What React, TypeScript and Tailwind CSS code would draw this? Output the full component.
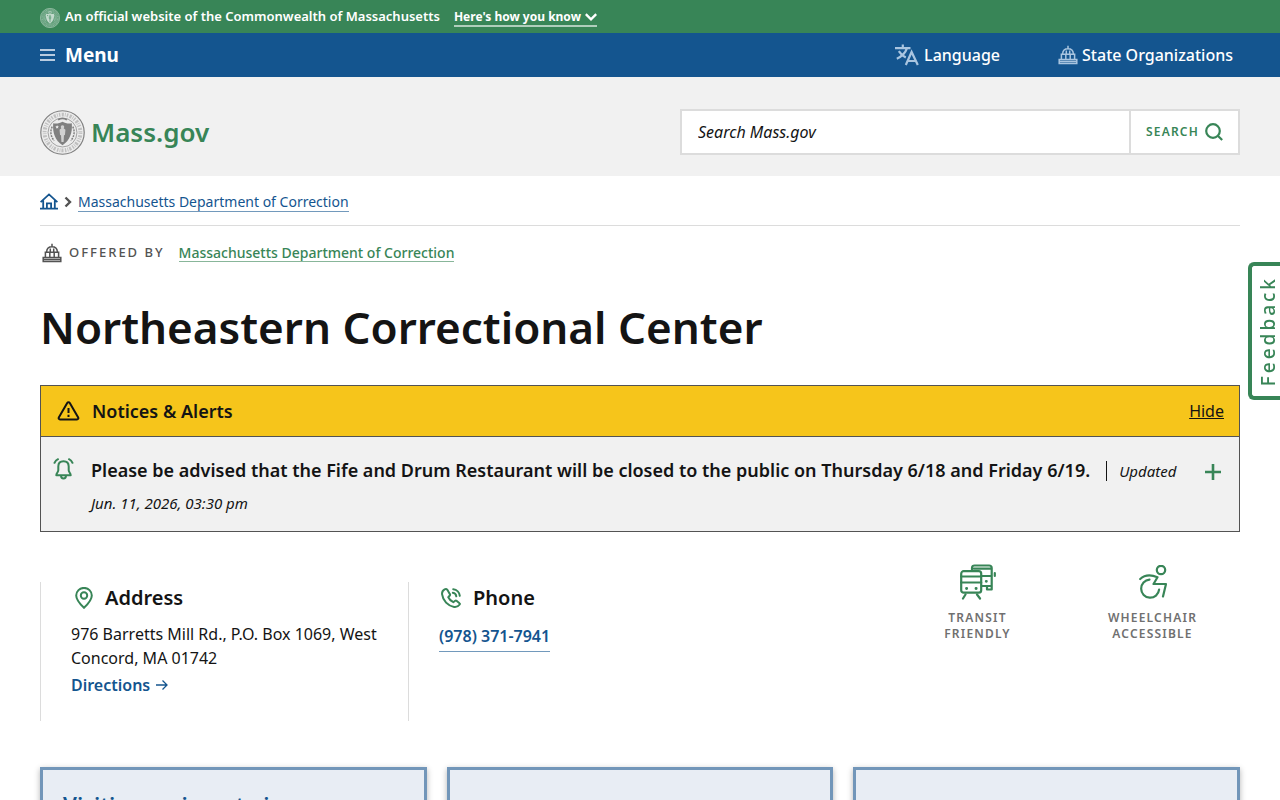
import type { ReactNode } from 'react';

function Seal({ className, color, face }: { className: string; color: string; face: string }) {
  return (
    <svg viewBox="0 0 46 46" className={className} fill="none" aria-hidden="true">
      <circle cx="23" cy="23" r="22.2" fill={face} stroke={color} strokeWidth="1.2" />
      <circle cx="23" cy="23" r="18.3" stroke={color} strokeWidth="4" strokeDasharray="1.4 1.5 2.2 1.1 .8 1.2" opacity=".4" />
      <circle cx="23" cy="23" r="14.8" stroke={color} strokeWidth=".7" />
      <path d="M12.500 17c-2.500 5-1.500 10 2 14.500M33.500 17c2.500 5 1.500 10-2 14.500" stroke={color} strokeWidth="1.5" strokeDasharray="2 1" />
      <path d="M13.500 13.500c3.400.8 6.500 0 9.500-1.500 3 1.500 6.100 2.300 9.500 1.500C33.300 23.500 30.500 31 23 36c-7.500-5-10.300-12.500-9.500-22.500Z" fill={color} />
      <path d="M23 15.500a1.800 1.800 0 0 1 1.200 3.100l1.800 1.600-.5 5.300-1 .2-.4 7h-2.200l-.4-7-1-.2-.5-5.300 1.800-1.600a1.800 1.800 0 0 1 1.200-3.100Z" fill={face} opacity=".75" />
      <path d="m17.500 15.500.6 1.200 1.200.1-.9.9.3 1.200-1.200-.6-1.100.600.2-1.200-.9-.9 1.200-.1Z" fill={face} />
      <path d="M18.500 10c2.500-1.700 6.500-1.700 9 0" stroke={color} strokeWidth="1.800" />
    </svg>
  );
}

function Capitol({ className }: { className: string }) {
  return (
    <svg viewBox="0 0 20 20" className={className} fill="none" stroke="currentColor" strokeWidth="1.500" aria-hidden="true">
      <path d="M10 .8v2.800M4.600 9C4.800 5.600 7 3.800 10 3.800s5.200 1.800 5.400 5.200M8.300 5.500V9M11.700 5.500V9" />
      <path d="M2.600 9.200h14.800M3.400 9.200v5M7.800 9.200v5M12.200 9.200v5M16.600 9.200v5" />
      <path d="M1.200 14.400h17.600v4H1.200zM1.200 16.400h17.600" />
    </svg>
  );
}

function Translate({ className }: { className: string }) {
  return (
    <svg viewBox="0 0 24 22" className={className} fill="none" stroke="currentColor" strokeWidth="2.200" aria-hidden="true">
      <path d="M0 4.200h15.500M7.800 .6v3.600M12 4.200c-1.600 5-5 8.200-10.200 10.500M3.800 7.200c2 3.200 4.400 5 7 6.200" />
      <path d="m10.800 21 5.800-13 6.200 13M13 17h8" />
    </svg>
  );
}

function House() {
  return (
    <svg viewBox="0 0 18 17" className="h-[17px] w-[18px]" fill="none" stroke="currentColor" strokeWidth="1.800" aria-hidden="true">
      <path d="M.6 9.200 9 1.400l8.400 7.800M3.200 7.500V15M14.800 7.500V15M0 15.600h18M6.900 15v-4.700h4.200V15" />
    </svg>
  );
}

function Chevron({ className, down }: { className: string; down?: boolean }) {
  return (
    <svg viewBox="0 0 12 12" className={className} fill="none" stroke="currentColor" strokeWidth="2.400" aria-hidden="true">
      <path d={down ? 'm.8 3.200 5.200 5.200 5.200-5.200' : 'm3.500 1.500 4.500 4.500-4.500 4.500'} />
    </svg>
  );
}

function SearchGlass() {
  return (
    <svg viewBox="0 0 18 18" className="size-[18px]" fill="none" stroke="currentColor" strokeWidth="2.200" aria-hidden="true">
      <circle cx="8" cy="8" r="6.800" />
      <path d="m12.800 12.800 4.400 4.200" />
    </svg>
  );
}

function Warning() {
  return (
    <svg viewBox="0 0 22 20" className="h-5 w-[23px]" fill="none" stroke="currentColor" strokeWidth="2" strokeLinejoin="round" aria-hidden="true">
      <path d="M9.700 2 1.300 16.400c-.5 1 .1 2 1.200 2h17c1.100 0 1.700-1 1.200-2L12.300 2c-.6-1-2-1-2.600 0Z" />
      <path d="M11 7v5M11 13.700v2.200" />
    </svg>
  );
}

function Bell() {
  return (
    <svg viewBox="0 0 20 22" className="h-[22px] w-[21px]" fill="none" stroke="currentColor" strokeWidth="2" strokeLinecap="round" strokeLinejoin="round" aria-hidden="true">
      <path d="M10 3.200c-3.400 0-5.200 2.300-5.200 5.300v3.800c0 1.800-2 3.200-2 4.900h14.400c0-1.700-2-3.100-2-4.900V8.500c0-3-1.800-5.300-5.200-5.300ZM7.500 17.500c0 1.900 1 3 2.500 3s2.500-1.100 2.500-3" />
      <path d="M1 4.800C1.700 3.200 2.800 2 4.500 1.200M19 4.800c-.7-1.600-1.800-2.800-3.500-3.600" />
    </svg>
  );
}

function MapPin() {
  return (
    <svg viewBox="0 0 18 22" className="h-[22px] w-[18px]" fill="none" stroke="currentColor" strokeWidth="2" aria-hidden="true">
      <path d="M9 20.800C5 17 1.200 13 1.200 8.500a7.800 7.600 0 0 1 15.600 0C16.800 13 13 17 9 20.800Z" />
      <circle cx="9" cy="8.500" r="3.200" />
    </svg>
  );
}

function PhoneCall() {
  return (
    <svg viewBox="0 0 20 20" className="size-5" fill="none" stroke="currentColor" strokeWidth="2" strokeLinejoin="round" strokeLinecap="round" aria-hidden="true">
      <path d="M3.600 1.400C1.800 2.400.8 4 1.100 6.300c.8 6.300 5.800 11.600 12 12.600 2.200.3 4.300-.6 5.600-2.400.3-.5.200-1-.2-1.300l-3-2.400c-.4-.3-.9-.3-1.300 0l-1.900 1.400c-2.200-1-3.900-2.700-5-5l1.500-1.700c.3-.4.400-.9.100-1.300L6.500 2c-.6-1-1.700-1.200-2.900-.6Z" />
      <path d="M12.200 1.200c3.600.4 6.300 3.100 6.600 6.600M11.800 4.800c2 .3 3.300 1.600 3.500 3.500" />
    </svg>
  );
}

function Transit() {
  return (
    <svg viewBox="0 0 36 36" className="size-9" fill="none" stroke="currentColor" strokeWidth="2.200" strokeLinecap="round" strokeLinejoin="round" aria-hidden="true">
      <rect x="1.200" y="7.200" width="20" height="21.500" rx="2.500" />
      <path d="M1.200 12.500h20M1.200 18.500h20M5.500 30.500 3 34.500M17 30.500l3 4" />
      <path d="M12 7V4c0-1.700 1-2.500 2.500-2.500H29c1.700 0 2.700.8 2.700 2.500v18H22M14 4.700h16M21.500 12h10M27 22v3.500h4.700V22M34.800 9v3" />
      <path d="M6.500 24.500h.2M16 24.500h.2M26.200 17.300h.2" strokeWidth="2.800" />
    </svg>
  );
}

function Wheelchair() {
  return (
    <svg viewBox="0 0 28 34" className="h-[34px] w-7" fill="none" stroke="currentColor" strokeWidth="2.200" strokeLinejoin="round" strokeLinecap="round" aria-hidden="true">
      <circle cx="22" cy="5" r="4.200" />
      <path d="M1.200 14C5.500 10 10.500 9 18.500 12.200L14.500 19H27l-3 12.500" />
      <path d="M10.500 14.700a9 9 0 1 0 9.600 10" />
    </svg>
  );
}

function Amenity({ icon, top, bottom }: { icon: ReactNode; top: string; bottom: string }) {
  return (
    <li className="flex flex-1 flex-col items-center">
      <span className="flex h-10 items-center text-[#388557]">{icon}</span>
      <span className="mt-2 text-center text-xs leading-4 font-semibold tracking-widest text-[#707070] uppercase">
        {top}
        <br />
        {bottom}
      </span>
    </li>
  );
}

function Card({ children }: { children?: ReactNode }) {
  return (
    <li className="min-h-32 border-3 border-[#7296b9] bg-[#e8edf4] px-5 pt-5 shadow-[0_2px_6px_rgba(0,0,0,0.3)]">
      {children}
    </li>
  );
}

export default function App() {
  return (
    <div className="h-screen overflow-x-hidden overflow-y-auto bg-white font-['Noto_Sans',sans-serif] text-[#141414] [scrollbar-width:none]">
      <div className="flex h-[33px] items-center bg-[#388557] px-10 text-white">
        <Seal className="mt-[3px] size-5" color="#c3dacd" face="#5f9d78" />
        <span className="ml-[5px] text-[13px] font-semibold">An official website of the Commonwealth of Massachusetts</span>
        <button className="mt-[3px] ml-[14px] flex items-center gap-1 border-b-2 border-white/60 text-xs leading-4 font-bold">
          Here&apos;s how you know
          <Chevron className="size-3" down />
        </button>
      </div>

      <nav className="flex h-11 items-center justify-between bg-[#14558f] pr-[47px] pl-10 text-white">
        <button className="flex items-center gap-[10px] text-[19px] font-bold">
          <svg viewBox="0 0 15 12" className="h-3 w-[15px]" stroke="#b9cce0" strokeWidth="2" aria-hidden="true">
            <path d="M0 1h15M0 6h15M0 11h15" />
          </svg>
          Menu
        </button>
        <div className="flex gap-[58px] font-medium">
          <button className="flex items-center gap-[5px]">
            <Translate className="h-[22px] w-6 text-[#a9c5e0]" />
            Language
          </button>
          <button className="flex items-center gap-1">
            <Capitol className="size-5 text-[#a9c5e0]" />
            State Organizations
          </button>
        </div>
      </nav>

      <header className="flex items-start justify-between bg-[#f1f1f1] px-10 pt-8 pb-[21px]">
        <a href="#" className="flex items-center gap-[6px] text-[26px] leading-[46px] font-semibold text-[#388557]">
          <Seal className="size-[45px]" color="#808080" face="#ececec" />
          Mass.gov
        </a>
        <form className="flex h-[46px] w-[560px] border-2 border-[#dcdcdc] bg-white" onSubmit={(e) => e.preventDefault()}>
          <input
            type="search"
            aria-label="Search Mass.gov"
            placeholder="Search Mass.gov"
            className="min-w-0 flex-1 px-4 text-base italic outline-none placeholder:text-[#141414]"
          />
          <button className="flex w-[109px] items-center justify-center gap-[6px] border-l-2 border-[#dcdcdc] text-xs font-semibold tracking-widest text-[#388557]">
            SEARCH
            <SearchGlass />
          </button>
        </form>
      </header>

      <main className="px-10">
        <nav aria-label="Breadcrumb" className="flex h-[50px] items-center border-b border-[#dcdcdc] pt-[2px] text-sm text-[#14558f]">
          <a href="#" aria-label="Home">
            <House />
          </a>
          <Chevron className="mx-1 size-3 text-[#535353]" />
          <a href="#" className="border-b border-[#14558f]/60 leading-[19px]">
            Massachusetts Department of Correction
          </a>
        </nav>

        <div className="mt-4 flex h-[22px] items-center text-[13px]">
          <Capitol className="ml-[2px] size-5 text-[#535353]" />
          <span className="ml-[7px] font-medium tracking-[2px] text-[#535353]">OFFERED BY</span>
          <a href="#" className="ml-[14px] border-b border-[#388557]/60 text-sm leading-4 font-medium text-[#388557]">
            Massachusetts Department of Correction
          </a>
        </div>

        <h1 className="mt-[35px] text-[44px] leading-[56px] font-semibold">Northeastern Correctional Center</h1>

        <section className="mt-[30px] border border-[#535353] bg-[#f1f1f1]">
          <div className="flex h-[51px] items-center justify-between border-b border-[#535353] bg-[#f6c51b] pr-[15px] pl-4">
            <h2 className="flex items-center gap-3 text-lg font-semibold">
              <Warning />
              Notices &amp; Alerts
            </h2>
            <button className="text-base underline">Hide</button>
          </div>
          <div className="flex h-[94px] items-start pt-[18px] pr-[18px] pl-3">
            <span className="mt-[3px] text-[#388557]">
              <Bell />
            </span>
            <p className="ml-[17px] flex-1 pr-5 text-lg leading-[31px] font-semibold">
              Please be advised that the Fife and Drum Restaurant will be closed to the public on Thursday 6/18 and Friday 6/19.
              <span className="ml-4 border-l border-[#141414] pl-3 text-[15px] font-normal italic">Updated Jun. 11, 2026, 03:30 pm</span>
            </p>
            <button aria-label="Expand alert" className="mt-[9px] text-[#388557]">
              <svg viewBox="0 0 16 16" className="size-4" stroke="currentColor" strokeWidth="2.600" aria-hidden="true">
                <path d="M8 0v16M0 8h16" />
              </svg>
            </button>
          </div>
        </section>

        <div className="mt-[30px] flex justify-between">
          <div className="mt-5 flex h-[139px]">
            <section className="w-[368px] border-l border-[#dcdcdc] pl-[30px]">
              <h2 className="flex items-center gap-3 pl-1 text-xl leading-8 font-semibold">
                <span className="text-[#388557]">
                  <MapPin />
                </span>
                Address
              </h2>
              <p className="mt-2 pr-[30px] text-base">976 Barretts Mill Rd., P.O. Box 1069, West Concord, MA 01742</p>
              <a href="#" className="mt-[3px] flex items-center gap-[6px] font-semibold text-[#14558f]">
                Directions
                <svg viewBox="0 0 12 12" className="size-3" fill="none" stroke="currentColor" strokeWidth="1.300" aria-hidden="true">
                  <path d="M0 6h11M6.500 1.500 11 6l-4.500 4.500" />
                </svg>
              </a>
            </section>
            <section className="border-l border-[#dcdcdc] pl-[30px]">
              <h2 className="flex items-center gap-3 pl-[2px] text-xl leading-8 font-semibold">
                <span className="text-[#388557]">
                  <PhoneCall />
                </span>
                Phone
              </h2>
              <a href="tel:+19783717941" className="mt-2 inline-block border-b border-[#14558f]/60 pt-[2px] pb-[3px] leading-6 font-semibold text-[#14558f]">
                (978) 371-7941
              </a>
            </section>
          </div>
          <ul className="flex w-[350px]">
            <Amenity icon={<Transit />} top="Transit" bottom="Friendly" />
            <Amenity icon={<Wheelchair />} top="Wheelchair" bottom="Accessible" />
          </ul>
        </div>

        <ul className="mt-[46px] grid grid-cols-3 gap-5">
          <Card>
            <h2 className="text-[22px] leading-7 font-semibold text-[#14558f]">
              <a href="#">Visiting an inmate in Massachusetts</a>
            </h2>
          </Card>
          <Card />
          <Card />
        </ul>
      </main>

      <button className="fixed top-[262px] right-0 flex h-[138px] w-8 items-center justify-center rounded-l-md border-4 border-r-0 border-[#388557] bg-white pl-1 text-[19px] font-medium tracking-[3px] text-[#388557]">
        <span className="rotate-180 leading-5 [writing-mode:vertical-rl]">Feedback</span>
      </button>
    </div>
  );
}
